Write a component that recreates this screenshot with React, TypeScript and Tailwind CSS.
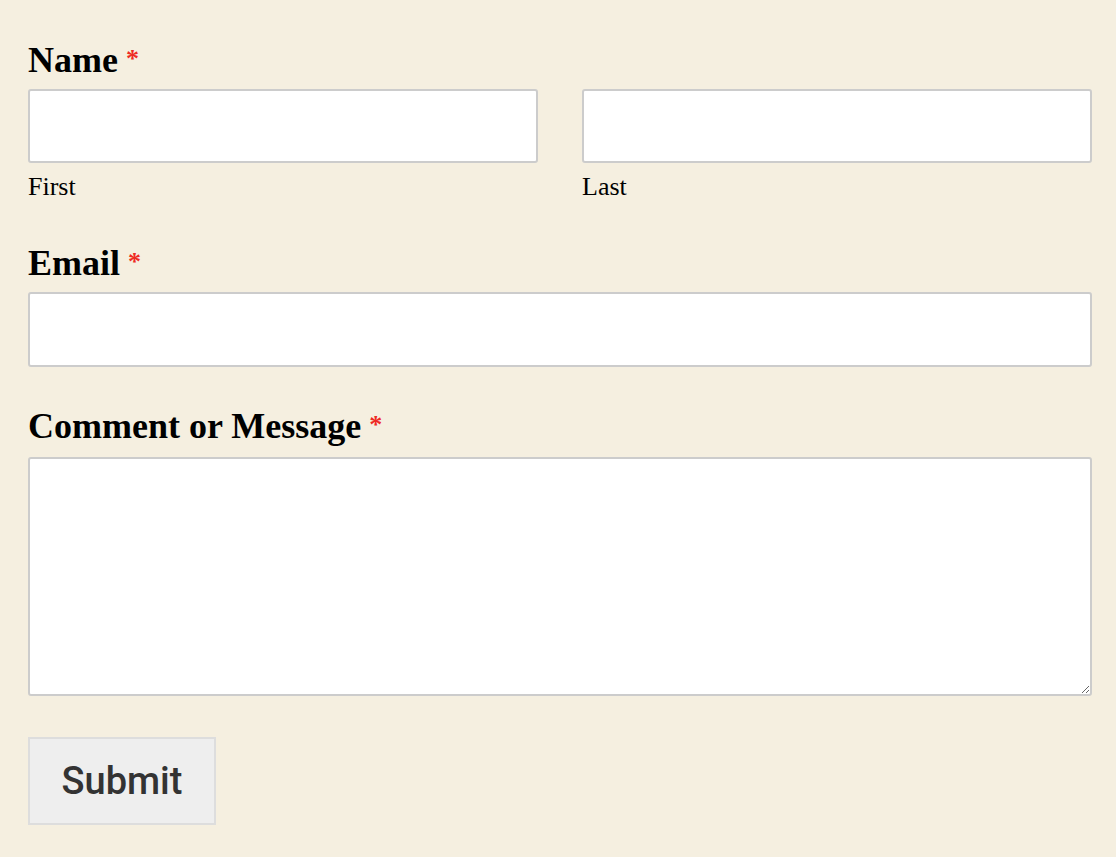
export default function App() {
  const labelCls =
    "block text-[36px] leading-[42px] font-bold text-black [font-family:'Liberation_Serif',serif]";
  const subCls =
    "block text-[26px] leading-[30px] text-black [font-family:'Liberation_Serif',serif]";
  const inputCls =
    "block w-full h-[74px] bg-white border-2 border-[#cccccc] rounded-[3px] px-3 outline-none";

  const Star = () => (
    <span className="ml-[8px] text-[#ee2a24] font-bold text-[26px] align-top relative top-[-1px]">*</span>
  );

  return (
    <div className="min-h-[857px] w-full bg-[#f5efe0] pl-[28px] pr-[24px] pt-[39px]">
      <form onSubmit={(e) => e.preventDefault()}>
        {/* Name */}
        <label className={labelCls}>
          Name<Star />
        </label>
        <div className="mt-[8px] grid grid-cols-2 gap-x-[44px]">
          <div>
            <input className={inputCls} />
            <span className={subCls + " mt-[9px]"}>First</span>
          </div>
          <div>
            <input className={inputCls} />
            <span className={subCls + " mt-[9px]"}>Last</span>
          </div>
        </div>

        {/* Email */}
        <label className={labelCls + " mt-[40px]"}>
          Email<Star />
        </label>
        <input className={inputCls + " mt-[8px] h-[75px]"} />

        {/* Comment */}
        <label className={labelCls + " mt-[38px]"}>
          Comment or Message<Star />
        </label>
        <textarea className="mt-[10px] block w-full h-[239px] bg-white border-2 border-[#cccccc] rounded-[3px] p-3 outline-none" />

        <button
          type="submit"
          className="mt-[41px] w-[188px] h-[88px] bg-[#eeeeee] border-2 border-[#dddddd] text-[#333333] text-[38px] font-medium [font-family:Roboto,'Liberation_Sans',sans-serif]"
        >
          Submit
        </button>
      </form>
    </div>
  );
}
